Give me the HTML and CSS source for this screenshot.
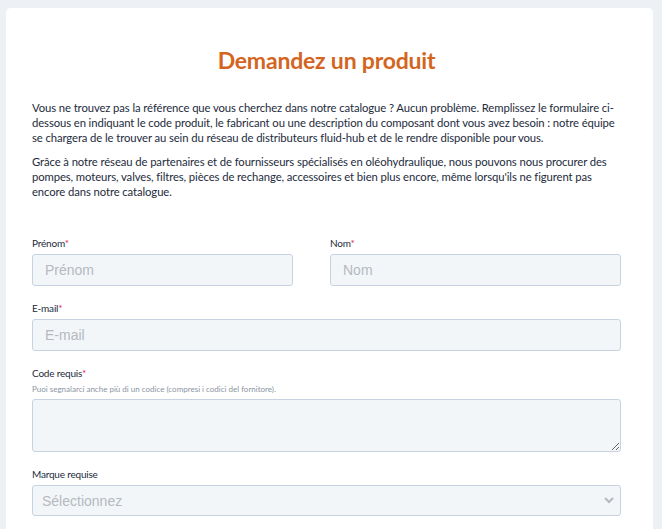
FILE: index.html
```html
<!DOCTYPE html>
<html lang="fr">
<head>
    <meta charset="UTF-8">
    <meta name="viewport" content="width=device-width, initial-scale=1.0">
    <title>Demandez un produit</title>
    <link rel="stylesheet" href="styles.css">
</head>
<body>

    <div class="card">
        <h1>Demandez un produit</h1>

        <p>Vous ne trouvez pas la référence que vous cherchez dans notre catalogue ? Aucun problème. Remplissez le formulaire ci-dessous en indiquant le code produit, le fabricant ou une description du composant dont vous avez besoin : notre équipe se chargera de le trouver au sein du réseau de distributeurs fluid-hub et de le rendre disponible pour vous.</p>

        <p>Grâce à notre réseau de partenaires et de fournisseurs spécialisés en oléohydraulique, nous pouvons nous procurer des pompes, moteurs, valves, filtres, pièces de rechange, accessoires et bien plus encore, même lorsqu'ils ne figurent pas encore dans notre catalogue.</p>

        <form class="request-form">
            <div class="row">
                <div class="field">
                    <label for="firstName">Prénom<span class="req">*</span></label>
                    <input type="text" id="firstName" placeholder="Prénom">
                </div>
                <div class="field">
                    <label for="lastName">Nom<span class="req">*</span></label>
                    <input type="text" id="lastName" placeholder="Nom">
                </div>
            </div>

            <div class="field">
                <label for="email">E-mail<span class="req">*</span></label>
                <input type="text" id="email" placeholder="E-mail">
            </div>

            <div class="field">
                <label for="code">Code requis<span class="req">*</span></label>
                <span class="hint">Puoi segnalarci anche più di un codice (compresi i codici del fornitore).</span>
                <textarea id="code"></textarea>
            </div>

            <div class="field">
                <label for="brand">Marque requise</label>
                <select id="brand">
                    <option>Sélectionnez</option>
                </select>
            </div>
        </form>
    </div>

</body>
</html>
```

FILE: styles.css
```css
body {
    margin: 0;
    padding: 8px 9px 0 6px;
    background-color: #edf1f5;
    font-family: "Lato", "Open Sans", sans-serif;
    color: #1d2b3c;
}

.card {
    background-color: #fff;
    border-radius: 5px 5px 0 0;
    padding: 38px 32px 40px 26px;
}

h1 {
    margin: 0 0 26px;
    text-align: center;
    color: #d4651f;
    font-size: 23px;
    font-weight: 700;
    letter-spacing: -0.2px;
}

p {
    margin: 0 0 9px;
    font-size: 11.3px;
    line-height: 15px;
    letter-spacing: -0.1px;
}

.request-form {
    margin-top: 38px;
}

.row {
    display: grid;
    grid-template-columns: 261px 1fr;
    gap: 37px;
}

.field {
    display: flex;
    flex-direction: column;
    margin-bottom: 16px;
}

label {
    font-size: 10px;
    margin-bottom: 5px;
    letter-spacing: -0.2px;
}

.req {
    color: #e0245e;
}

.hint {
    font-size: 8px;
    color: #8a94a3;
    margin: 0 0 5px;
}

input,
textarea,
select {
    box-sizing: border-box;
    width: 100%;
    background-color: #f3f6f9;
    border: 1px solid #c8d3e1;
    border-radius: 3px;
    font-family: "Liberation Sans", Arial, sans-serif;
    font-size: 14px;
    color: #555;
}

input {
    height: 32px;
    padding: 0 12px;
}

input::placeholder {
    color: #b5b9bf;
}

textarea {
    height: 53px;
    resize: vertical;
}

select {
    height: 31px;
    padding: 0 9px;
    color: #b5b9bf;
    appearance: none;
    background-image: url("data:image/svg+xml;utf8,<svg xmlns='http://www.w3.org/2000/svg' width='10' height='7' viewBox='0 0 10 7'><path d='M1 1l4 4 4-4' fill='none' stroke='%23b5b9bf' stroke-width='2'/></svg>");
    background-repeat: no-repeat;
    background-position: right 6px center;
}
```
